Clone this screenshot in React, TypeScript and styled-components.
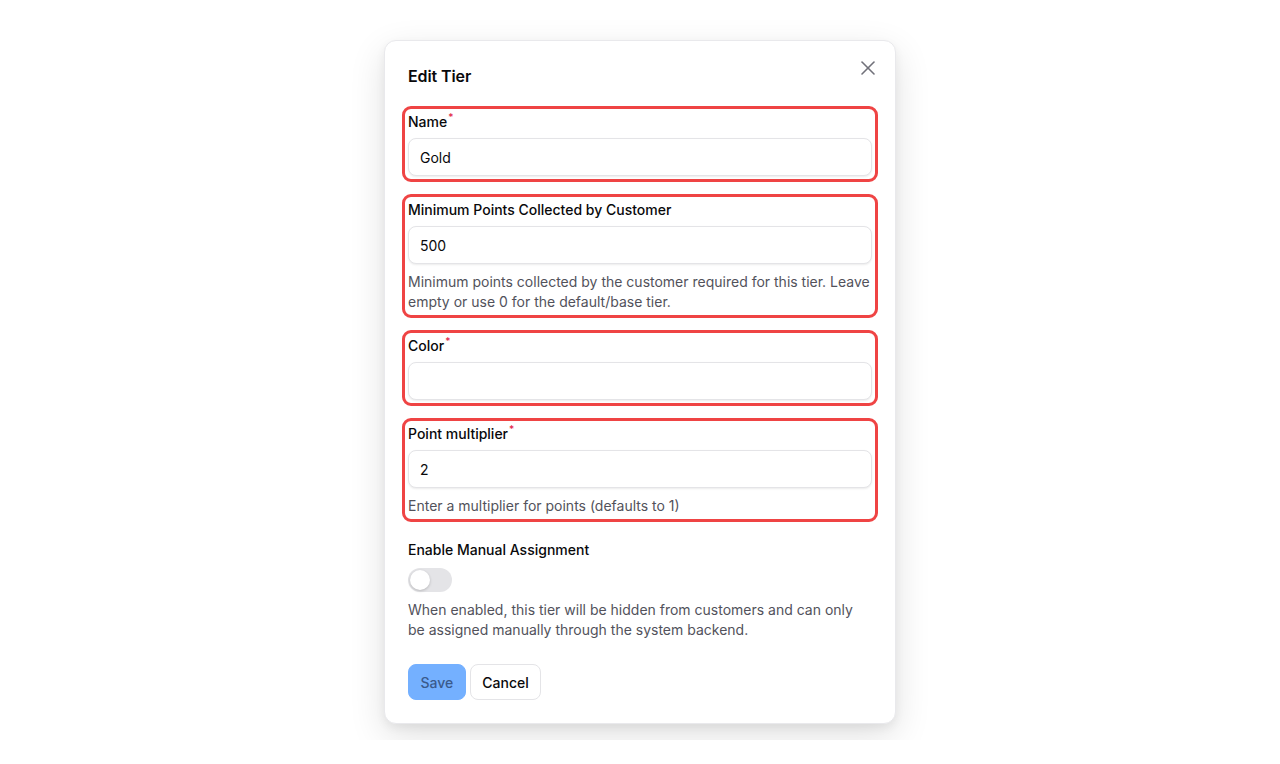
import styled, { createGlobalStyle } from "styled-components";

const GlobalStyle = createGlobalStyle`
  * {
    box-sizing: border-box;
  }
  body {
    margin: 0;
    background: #ffffff;
    font-family: Inter, "Noto Sans", "Liberation Sans", sans-serif;
    color: #09090b;
    -webkit-font-smoothing: antialiased;
  }
`;

const Stage = styled.div`
  height: 740px;
  overflow: hidden;
  display: flex;
  justify-content: center;
  padding-top: 40px;
`;

const Modal = styled.div`
  position: relative;
  width: 512px;
  height: 684px;
  background: #ffffff;
  border: 1px solid #e9e9ec;
  border-radius: 12px;
  box-shadow: 0 12px 36px rgba(0, 0, 0, 0.12), 0 4px 10px rgba(0, 0, 0, 0.06);
  padding: 23px;
  display: flex;
  flex-direction: column;
`;

const Title = styled.h2`
  margin: 0 0 24px;
  font-size: 16px;
  line-height: 24px;
  font-weight: 600;
  letter-spacing: -0.1px;
`;

const CloseButton = styled.button`
  position: absolute;
  top: 15px;
  right: 15px;
  width: 24px;
  height: 24px;
  padding: 0;
  border: none;
  background: none;
  color: #71717a;
  display: flex;
  align-items: center;
  justify-content: center;
  cursor: pointer;
`;

const Form = styled.form`
  display: flex;
  flex-direction: column;
  gap: 24px;
`;

const Field = styled.div<{ $highlighted?: boolean }>`
  display: flex;
  flex-direction: column;
  border-radius: 3px;
  outline: ${(p) => (p.$highlighted ? "3px solid #ef4444" : "none")};
  outline-offset: 3px;
`;

const Label = styled.label`
  font-size: 14px;
  line-height: 20px;
  font-weight: 500;
  margin-bottom: 6px;
`;

const Required = styled.sup`
  color: #e11d48;
  font-size: 10px;
  line-height: 0;
  margin-left: 1px;
  vertical-align: 6px;
`;

const Input = styled.input`
  height: 38px;
  width: 100%;
  padding: 0 11px;
  border: 1px solid #e4e4e7;
  border-radius: 8px;
  box-shadow: 0 1px 2px rgba(0, 0, 0, 0.08);
  font-family: inherit;
  font-size: 14px;
  color: #09090b;
  background: #ffffff;
  outline: none;
`;

const Hint = styled.p`
  margin: 8px 0 0;
  font-size: 14px;
  line-height: 20px;
  color: #52525b;
`;

const Track = styled.div<{ $on: boolean }>`
  margin-top: 2px;
  width: 44px;
  height: 24px;
  border-radius: 12px;
  background: ${(p) => (p.$on ? "#3b82f6" : "#e4e4e7")};
  padding: 2px;
  display: flex;
  justify-content: ${(p) => (p.$on ? "flex-end" : "flex-start")};
`;

const Thumb = styled.span`
  width: 20px;
  height: 20px;
  border-radius: 50%;
  background: #ffffff;
  box-shadow: 0 1px 3px rgba(0, 0, 0, 0.2);
`;

const Actions = styled.div`
  margin-top: 24px;
  display: flex;
  gap: 4px;
`;

const Button = styled.button<{ $primary?: boolean }>`
  height: 36px;
  padding: 0 11.5px;
  border-radius: 8px;
  font-family: inherit;
  font-size: 14px;
  font-weight: 500;
  cursor: pointer;
  border: 1px solid ${(p) => (p.$primary ? "#74b0ff" : "#e4e4e7")};
  background: ${(p) => (p.$primary ? "#74b0ff" : "#ffffff")};
  color: ${(p) => (p.$primary ? "#3a5a8c" : "#09090b")};
`;

export default function App() {
  return (
    <>
      <GlobalStyle />
      <Stage>
        <Modal>
          <Title>Edit Tier</Title>
          <CloseButton aria-label="Close">
            <svg width="24" height="24" viewBox="0 0 24 24" fill="none" stroke="currentColor" strokeWidth="1.6" strokeLinecap="round">
              <path d="M18 6 6 18" />
              <path d="m6 6 12 12" />
            </svg>
          </CloseButton>
          <Form onSubmit={(e) => e.preventDefault()}>
            <Field $highlighted>
              <Label>
                Name<Required>*</Required>
              </Label>
              <Input defaultValue="Gold" />
            </Field>
            <Field $highlighted>
              <Label>Minimum Points Collected by Customer</Label>
              <Input defaultValue="500" />
              <Hint>
                Minimum points collected by the customer required for this tier. Leave empty or use 0 for the
                default/base tier.
              </Hint>
            </Field>
            <Field $highlighted>
              <Label>
                Color<Required>*</Required>
              </Label>
              <Input defaultValue="" />
            </Field>
            <Field $highlighted>
              <Label>
                Point multiplier<Required>*</Required>
              </Label>
              <Input defaultValue="2" />
              <Hint>Enter a multiplier for points (defaults to 1)</Hint>
            </Field>
            <Field>
              <Label>Enable Manual Assignment</Label>
              <Track $on={false}>
                <Thumb />
              </Track>
              <Hint>
                When enabled, this tier will be hidden from customers and can only be assigned manually through the
                system backend.
              </Hint>
            </Field>
          </Form>
          <Actions>
            <Button $primary>Save</Button>
            <Button>Cancel</Button>
          </Actions>
        </Modal>
      </Stage>
    </>
  );
}
